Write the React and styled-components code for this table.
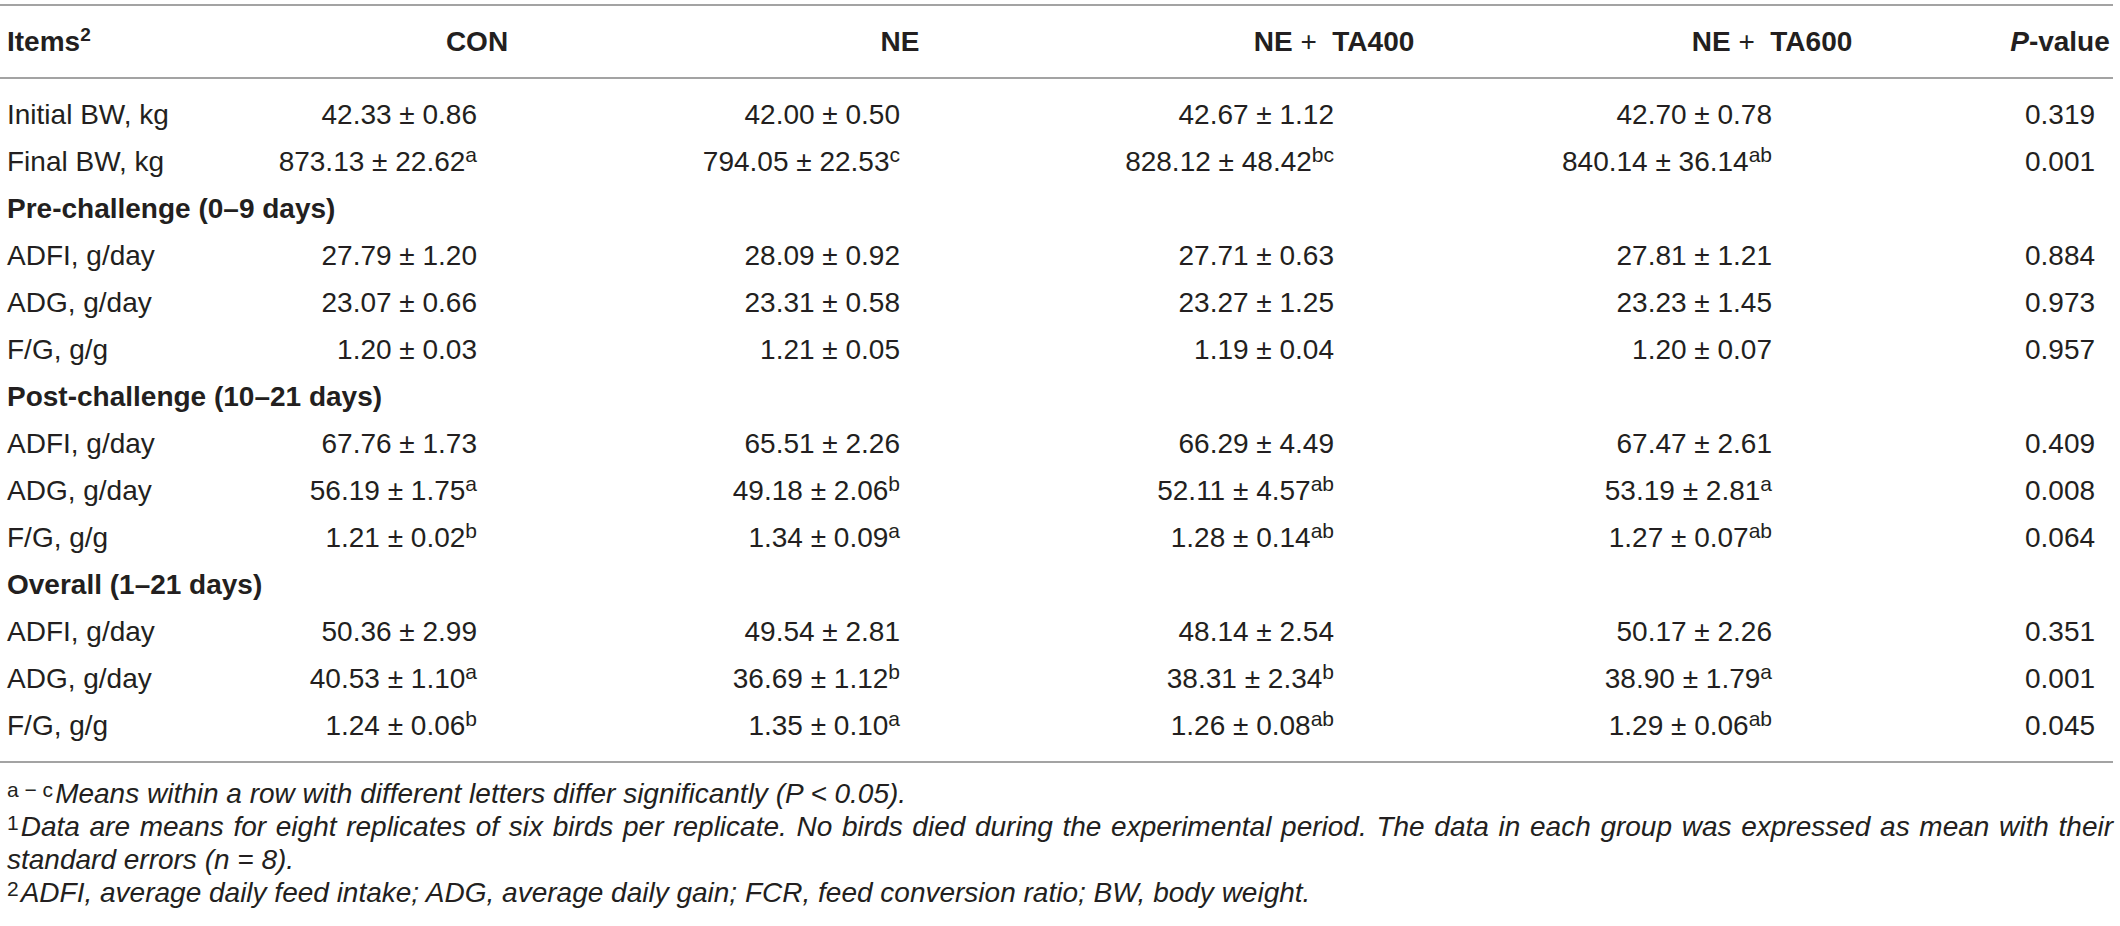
import React from "react";
import styled, { createGlobalStyle } from "styled-components";

const GlobalStyle = createGlobalStyle`
  html, body {
    margin: 0;
    padding: 0;
    background: #ffffff;
  }
`;

const COLS = "240px 237px 423px 434px 438px 1fr 106px";

const rows = [
  { label: "Initial BW, kg", v: [["42.33", "0.86"], ["42.00", "0.50"], ["42.67", "1.12"], ["42.70", "0.78"]], p: "0.319" },
  { label: "Final BW, kg", v: [["873.13", "22.62", "a"], ["794.05", "22.53", "c"], ["828.12", "48.42", "bc"], ["840.14", "36.14", "ab"]], p: "0.001" },
  { section: "Pre-challenge (0–9 days)" },
  { label: "ADFI, g/day", v: [["27.79", "1.20"], ["28.09", "0.92"], ["27.71", "0.63"], ["27.81", "1.21"]], p: "0.884" },
  { label: "ADG, g/day", v: [["23.07", "0.66"], ["23.31", "0.58"], ["23.27", "1.25"], ["23.23", "1.45"]], p: "0.973" },
  { label: "F/G, g/g", v: [["1.20", "0.03"], ["1.21", "0.05"], ["1.19", "0.04"], ["1.20", "0.07"]], p: "0.957" },
  { section: "Post-challenge (10–21 days)" },
  { label: "ADFI, g/day", v: [["67.76", "1.73"], ["65.51", "2.26"], ["66.29", "4.49"], ["67.47", "2.61"]], p: "0.409" },
  { label: "ADG, g/day", v: [["56.19", "1.75", "a"], ["49.18", "2.06", "b"], ["52.11", "4.57", "ab"], ["53.19", "2.81", "a"]], p: "0.008" },
  { label: "F/G, g/g", v: [["1.21", "0.02", "b"], ["1.34", "0.09", "a"], ["1.28", "0.14", "ab"], ["1.27", "0.07", "ab"]], p: "0.064" },
  { section: "Overall (1–21 days)" },
  { label: "ADFI, g/day", v: [["50.36", "2.99"], ["49.54", "2.81"], ["48.14", "2.54"], ["50.17", "2.26"]], p: "0.351" },
  { label: "ADG, g/day", v: [["40.53", "1.10", "a"], ["36.69", "1.12", "b"], ["38.31", "2.34", "b"], ["38.90", "1.79", "a"]], p: "0.001" },
  { label: "F/G, g/g", v: [["1.24", "0.06", "b"], ["1.35", "0.10", "a"], ["1.26", "0.08", "ab"], ["1.29", "0.06", "ab"]], p: "0.045" },
];

const App = () => {
  return (
    <>
      <GlobalStyle />
      <Page>
        <Table>
          <Rule />
          <HeadRow>
            <HeadFirst>
              Items<HeadSup>2</HeadSup>
            </HeadFirst>
            <HeadCell><HeadLabel>CON</HeadLabel></HeadCell>
            <HeadCell><HeadLabel>NE</HeadLabel></HeadCell>
            <HeadCell>
              <HeadLabel>NE <Plus>+</Plus>&nbsp; TA400</HeadLabel>
            </HeadCell>
            <HeadCell>
              <HeadLabel>NE <Plus>+</Plus>&nbsp; TA600</HeadLabel>
            </HeadCell>
            <span />
            <HeadCell center>
              <span><i>P</i>-value</span>
            </HeadCell>
          </HeadRow>
          <Rule />
          <Body>
            {rows.map((r, i) =>
              r.section ? (
                <SectionRow key={i}>
                  <span>{r.section}</span>
                </SectionRow>
              ) : (
                <Row key={i}>
                  <Label>{r.label}</Label>
                  {r.v.map((c, j) => (
                    <Value key={j}>
                      {c[0]} ± {c[1]}
                      {c[2] && <Sup>{c[2]}</Sup>}
                    </Value>
                  ))}
                  <span />
                  <Value center>{r.p}</Value>
                </Row>
              )
            )}
          </Body>
          <Rule />
          <Notes>
            <Note>
              <NoteSup>a − c</NoteSup>Means within a row with different letters differ significantly (P &lt; 0.05).
            </Note>
            <Note justify>
              <NoteSup>1</NoteSup>Data are means for eight replicates of six birds per replicate. No birds died during the experimental period. The data in each group was expressed as mean with their
            </Note>
            <Note>standard errors (n = 8).</Note>
            <Note>
              <NoteSup>2</NoteSup>ADFI, average daily feed intake; ADG, average daily gain; FCR, feed conversion ratio; BW, body weight.
            </Note>
          </Notes>
        </Table>
      </Page>
    </>
  );
};

export default App;

const Page = styled.div`
  padding-top: 4px;
  width: 2120px;
  min-height: 926px;
  box-sizing: border-box;
`;

const Table = styled.div`
  width: 2113px;
  font-family: "Liberation Sans", Arial, sans-serif;
  font-size: 28px;
  color: #231f20;
`;

const Rule = styled.div`
  height: 2px;
  background: #a3a3a3;
`;

const HeadRow = styled.div`
  display: grid;
  grid-template-columns: ${COLS};
  height: 71px;
  align-items: center;
  font-weight: bold;
`;

const HeadFirst = styled.div`
  padding-left: 7px;
  white-space: nowrap;
`;

const HeadSup = styled.sup`
  font-size: 19px;
  font-weight: bold;
  vertical-align: 10px;
  line-height: 0;
`;

const HeadCell = styled.div`
  display: flex;
  justify-content: ${(p) => (p.center ? "center" : "flex-end")};
  white-space: nowrap;
`;

const HeadLabel = styled.span`
  transform: translateX(50%);
`;

const Plus = styled.span`
  font-weight: normal;
`;

const Body = styled.div`
  padding: 12px 0 12px;
`;

const Row = styled.div`
  display: grid;
  grid-template-columns: ${COLS};
  height: 47px;
  align-items: center;
`;

const SectionRow = styled.div`
  height: 47px;
  display: flex;
  align-items: center;
  padding-left: 7px;
  font-weight: bold;
  white-space: nowrap;
`;

const Label = styled.div`
  padding-left: 7px;
  white-space: nowrap;
`;

const Value = styled.div`
  text-align: ${(p) => (p.center ? "center" : "right")};
  white-space: nowrap;
`;

const Sup = styled.sup`
  font-size: 21px;
  vertical-align: 9px;
  line-height: 0;
`;

const Notes = styled.div`
  padding: 14px 0 0 7px;
`;

const Note = styled.div`
  font-style: italic;
  line-height: 33px;
  white-space: nowrap;
  text-align: ${(p) => (p.justify ? "justify" : "left")};
  text-align-last: ${(p) => (p.justify ? "justify" : "auto")};
`;

const NoteSup = styled.sup`
  font-style: normal;
  font-size: 21px;
  vertical-align: 6px;
  line-height: 0;
  margin-right: 2px;
`;
